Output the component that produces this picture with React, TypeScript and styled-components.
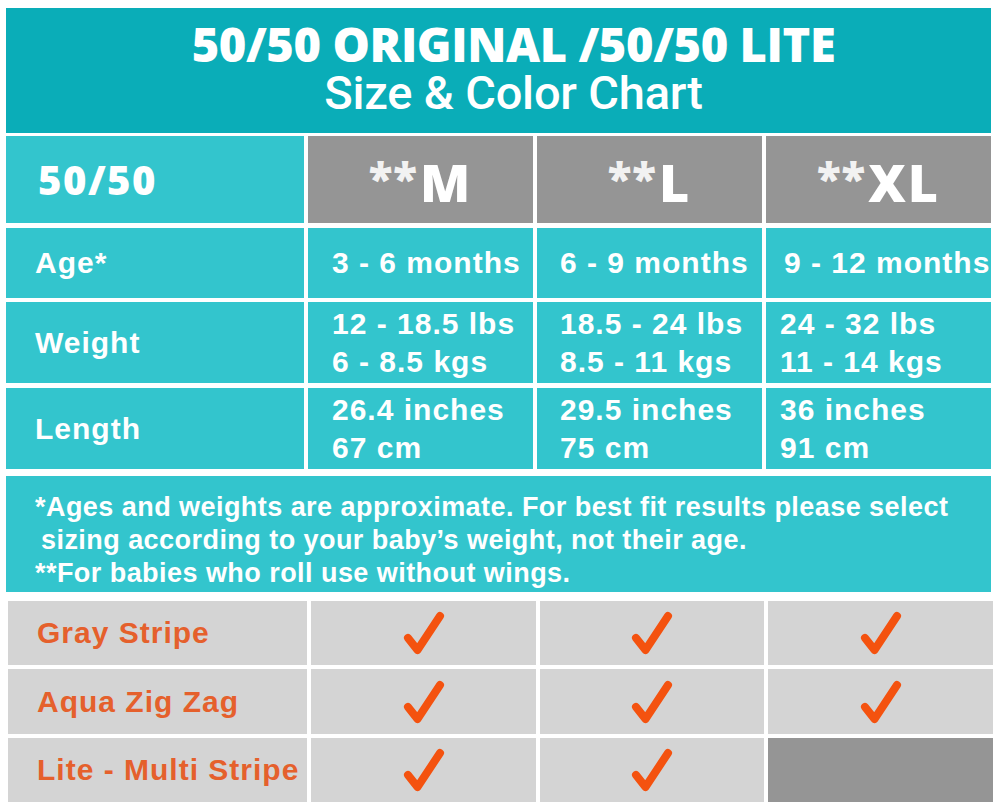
import React from "react";
import styled, { createGlobalStyle } from "styled-components";

const GlobalStyle = createGlobalStyle`
  html, body {
    margin: 0;
    padding: 0;
    background: #ffffff;
  }
  body {
    font-family: "Liberation Sans", Arial, sans-serif;
  }
`;

const TEAL_DARK = "#0aadb8";
const TEAL = "#33c5cd";
const GRAY = "#959595";
const LIGHT = "#d4d4d4";
const ORANGE = "#e5602c";
const CHECK = "#f4520f";

const Page = styled.div`
  width: 985px;
  padding: 8px 9px 7px 6px;
  background: #ffffff;
`;

const Header = styled.header`
  height: 125px;
  box-sizing: border-box;
  background: ${TEAL_DARK};
  color: #ffffff;
  display: flex;
  flex-direction: column;
  align-items: center;
  padding: 12px 0 0 30px;
`;

const Title = styled.div`
  font-family: "Open Sans", "Liberation Sans", sans-serif;
  font-weight: 800;
  font-size: 47px;
  line-height: 48px;
  letter-spacing: -0.4px;
  white-space: nowrap;
`;

const Subtitle = styled.div`
  font-family: Roboto, "Liberation Sans", sans-serif;
  font-weight: 500;
  font-size: 47px;
  line-height: 46px;
  letter-spacing: -0.2px;
  white-space: nowrap;
  margin-top: 2px;
`;

const Row = styled.div<{ $h: number; $mt: number; $cols?: string; $ml?: number }>`
  display: grid;
  grid-template-columns: ${(p) => p.$cols ?? "298px 225px 225px 225px"};
  column-gap: 4px;
  height: ${(p) => p.$h}px;
  margin-top: ${(p) => p.$mt}px;
  margin-left: ${(p) => p.$ml ?? 0}px;
`;

const BrandCell = styled.div`
  background: ${TEAL};
  color: #ffffff;
  display: flex;
  align-items: center;
  padding-left: 32px;
  font-family: "Open Sans", "Liberation Sans", sans-serif;
  font-weight: 800;
  font-size: 40px;
  letter-spacing: 1.5px;
`;

const SizeCell = styled.div`
  background: ${GRAY};
  color: #ffffff;
  display: flex;
  align-items: center;
  justify-content: center;
  font-family: "Open Sans", "Liberation Sans", sans-serif;
  font-weight: 800;
  font-size: 52px;
  letter-spacing: 2px;
  padding-top: 4px;
  box-sizing: border-box;
`;

const Stars = styled.span`
  font-size: 44px;
  letter-spacing: 1px;
  color: #f2f2f2;
  margin-right: 2px;
  position: relative;
  top: -4px;
`;

const LabelCell = styled.div`
  background: ${TEAL};
  color: #ffffff;
  display: flex;
  align-items: center;
  padding-left: 29px;
  font-weight: 700;
  font-size: 30px;
  letter-spacing: 1px;
`;

const DataCell = styled.div<{ $pl: number }>`
  background: ${TEAL};
  color: #ffffff;
  display: flex;
  flex-direction: column;
  justify-content: center;
  padding-left: ${(p) => p.$pl}px;
  font-weight: 700;
  font-size: 30px;
  line-height: 38px;
  letter-spacing: 1px;
  white-space: nowrap;
  overflow: visible;
`;

const Note = styled.div`
  background: ${TEAL};
  color: #ffffff;
  height: 116px;
  margin-top: 7px;
  box-sizing: border-box;
  padding: 15px 0 0 29px;
  font-weight: 700;
  font-size: 27px;
  line-height: 33px;
  letter-spacing: 0.45px;
  white-space: nowrap;
`;

const NoteLine = styled.div<{ $indent?: number }>`
  padding-left: ${(p) => p.$indent ?? 0}px;
`;

const ColorLabel = styled.div`
  background: ${LIGHT};
  color: ${ORANGE};
  display: flex;
  align-items: center;
  padding-left: 29px;
  font-weight: 700;
  font-size: 30px;
  letter-spacing: 1px;
  white-space: nowrap;
`;

const CheckCell = styled.div<{ $empty?: boolean }>`
  background: ${(p) => (p.$empty ? GRAY : LIGHT)};
  display: flex;
  align-items: center;
  justify-content: center;
`;

const Check = () => (
  <svg width="44" height="48" viewBox="0 0 44 48" aria-hidden="true">
    <path
      d="M6 29 L15.5 41 L38 7"
      fill="none"
      stroke={CHECK}
      strokeWidth="8"
      strokeLinecap="round"
      strokeLinejoin="round"
    />
  </svg>
);

type DataRow = { label: string; h: number; mt: number; cells: { pl: number; lines: string[] }[] };

const dataRows: DataRow[] = [
  {
    label: "Age*",
    h: 70,
    mt: 5,
    cells: [
      { pl: 24, lines: ["3 - 6 months"] },
      { pl: 23, lines: ["6 - 9 months"] },
      { pl: 18, lines: ["9 - 12 months"] },
    ],
  },
  {
    label: "Weight",
    h: 81,
    mt: 4,
    cells: [
      { pl: 24, lines: ["12 - 18.5 lbs", "6 - 8.5 kgs"] },
      { pl: 23, lines: ["18.5 - 24 lbs", "8.5 - 11 kgs"] },
      { pl: 14, lines: ["24 - 32 lbs", "11 - 14 kgs"] },
    ],
  },
  {
    label: "Length",
    h: 81,
    mt: 5,
    cells: [
      { pl: 24, lines: ["26.4 inches", "67 cm"] },
      { pl: 23, lines: ["29.5 inches", "75 cm"] },
      { pl: 14, lines: ["36 inches", "91 cm"] },
    ],
  },
];

const colorRows = [
  { name: "Gray Stripe", checks: [true, true, true], h: 64, mt: 9 },
  { name: "Aqua Zig Zag", checks: [true, true, true], h: 65, mt: 4 },
  { name: "Lite - Multi Stripe", checks: [true, true, false], h: 64, mt: 4 },
];

export default function App() {
  return (
    <>
      <GlobalStyle />
      <Page>
        <Header>
          <Title>50/50 ORIGINAL /50/50 LITE</Title>
          <Subtitle>Size &amp; Color Chart</Subtitle>
        </Header>

        <Row $h={87} $mt={3}>
          <BrandCell>50/50</BrandCell>
          {["M", "L", "XL"].map((s) => (
            <SizeCell key={s}>
              <Stars>**</Stars>
              {s}
            </SizeCell>
          ))}
        </Row>

        {dataRows.map((r) => (
          <Row key={r.label} $h={r.h} $mt={r.mt}>
            <LabelCell>{r.label}</LabelCell>
            {r.cells.map((c, i) => (
              <DataCell key={i} $pl={c.pl}>
                {c.lines.map((l) => (
                  <div key={l}>{l}</div>
                ))}
              </DataCell>
            ))}
          </Row>
        ))}

        <Note>
          <NoteLine>*Ages and weights are approximate. For best fit results please select</NoteLine>
          <NoteLine $indent={6}>sizing according to your baby’s weight, not their age.</NoteLine>
          <NoteLine>**For babies who roll use without wings.</NoteLine>
        </Note>

        {colorRows.map((r) => (
          <Row key={r.name} $h={r.h} $mt={r.mt} $ml={2} $cols="299px 225px 224px 225px">
            <ColorLabel>{r.name}</ColorLabel>
            {r.checks.map((c, i) => (
              <CheckCell key={i} $empty={!c}>
                {c && <Check />}
              </CheckCell>
            ))}
          </Row>
        ))}
      </Page>
    </>
  );
}
